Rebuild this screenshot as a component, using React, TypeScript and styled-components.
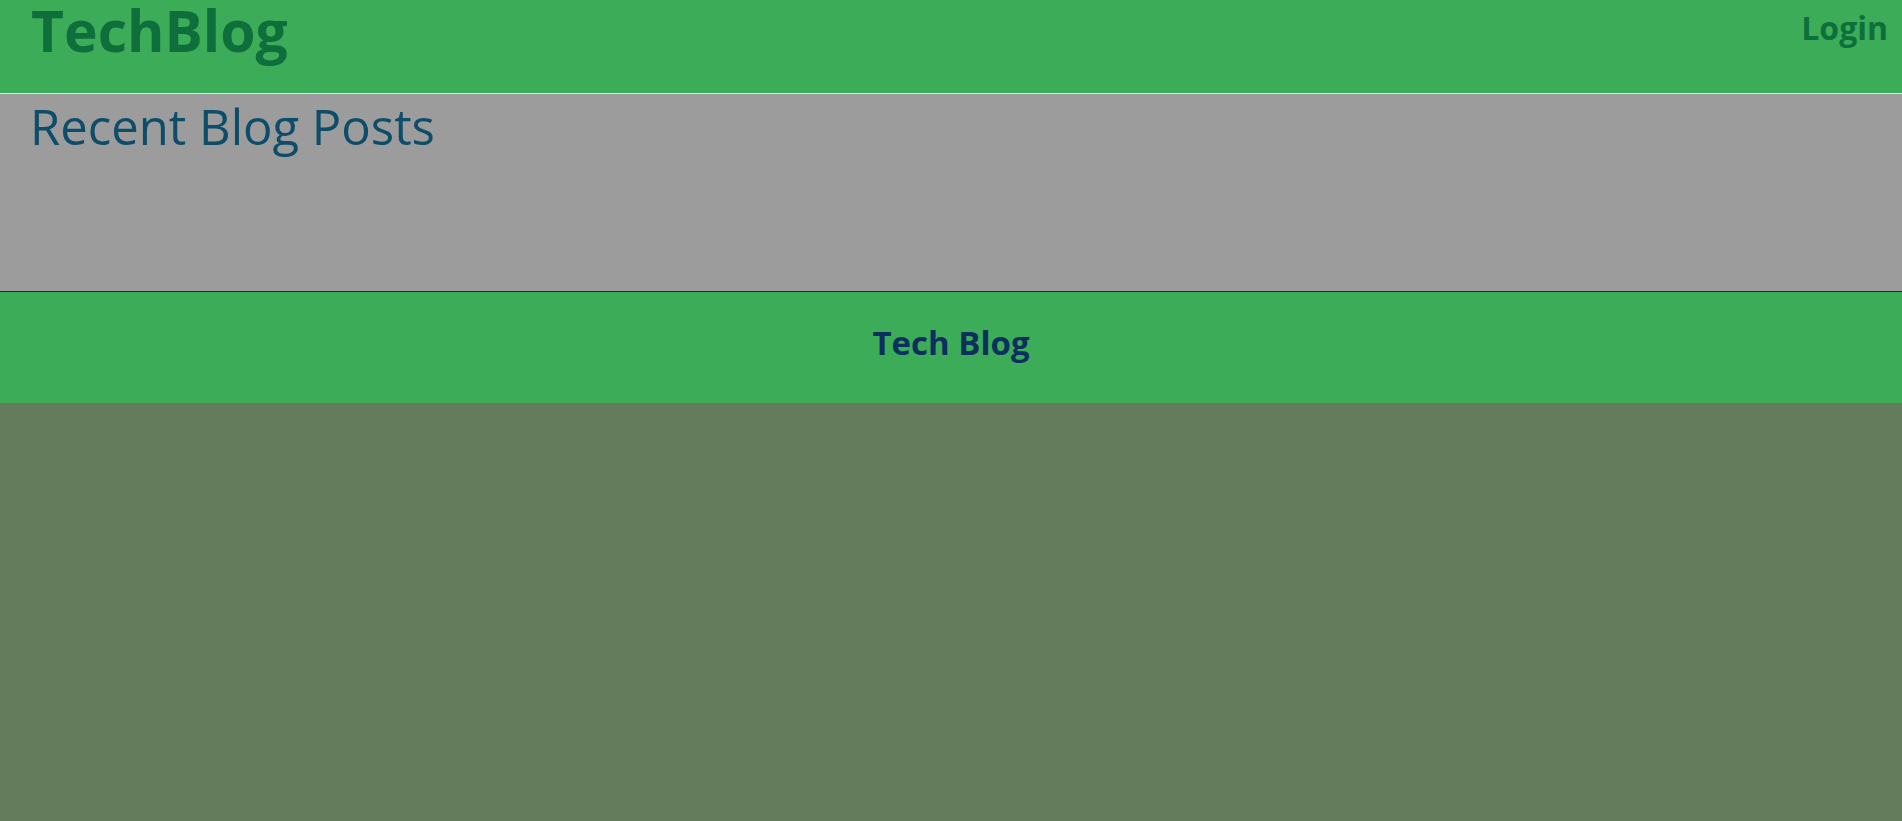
import React from "react";
import styled, { createGlobalStyle } from "styled-components";

const Global = createGlobalStyle`
  html, body {
    margin: 0;
    padding: 0;
    background: #647c5c;
    font-family: "Open Sans", "Noto Sans", sans-serif;
  }
`;

const Header = styled.header`
  height: 92px;
  box-sizing: content-box;
  background: #3cac58;
  border-bottom: 1px solid #d4ecd8;
  display: flex;
  justify-content: space-between;
  align-items: flex-start;
  padding: 1px 14px 0 31px;
`;

const Brand = styled.h1`
  margin: 0;
  font-size: 57px;
  line-height: 1.05;
  font-weight: 700;
  color: #0e6f3d;
`;

const NavLink = styled.a`
  margin-top: 11px;
  font-size: 32px;
  line-height: 1;
  font-weight: 700;
  color: #0e6f3d;
  text-decoration: none;
  cursor: pointer;
`;

const Main = styled.main`
  height: 197px;
  background: #9c9c9c;
  padding: 8px 30px 0;
  box-sizing: border-box;
`;

const Title = styled.h2`
  margin: 0;
  font-size: 49px;
  line-height: 1;
  font-weight: 400;
  color: #0d4d6a;
`;

const Footer = styled.footer`
  height: 112px;
  box-sizing: border-box;
  background: #3cac58;
  border-top: 1px solid #0d2b5c;
  padding-top: 34px;
  text-align: center;
`;

const FooterText = styled.p`
  margin: 0;
  font-size: 33px;
  line-height: 1;
  font-weight: 700;
  color: #0d2f5e;
`;

export default function App() {
  return (
    <>
      <Global />
      <Header>
        <Brand>TechBlog</Brand>
        <NavLink>Login</NavLink>
      </Header>
      <Main>
        <Title>Recent Blog Posts</Title>
      </Main>
      <Footer>
        <FooterText>Tech Blog</FooterText>
      </Footer>
    </>
  );
}
